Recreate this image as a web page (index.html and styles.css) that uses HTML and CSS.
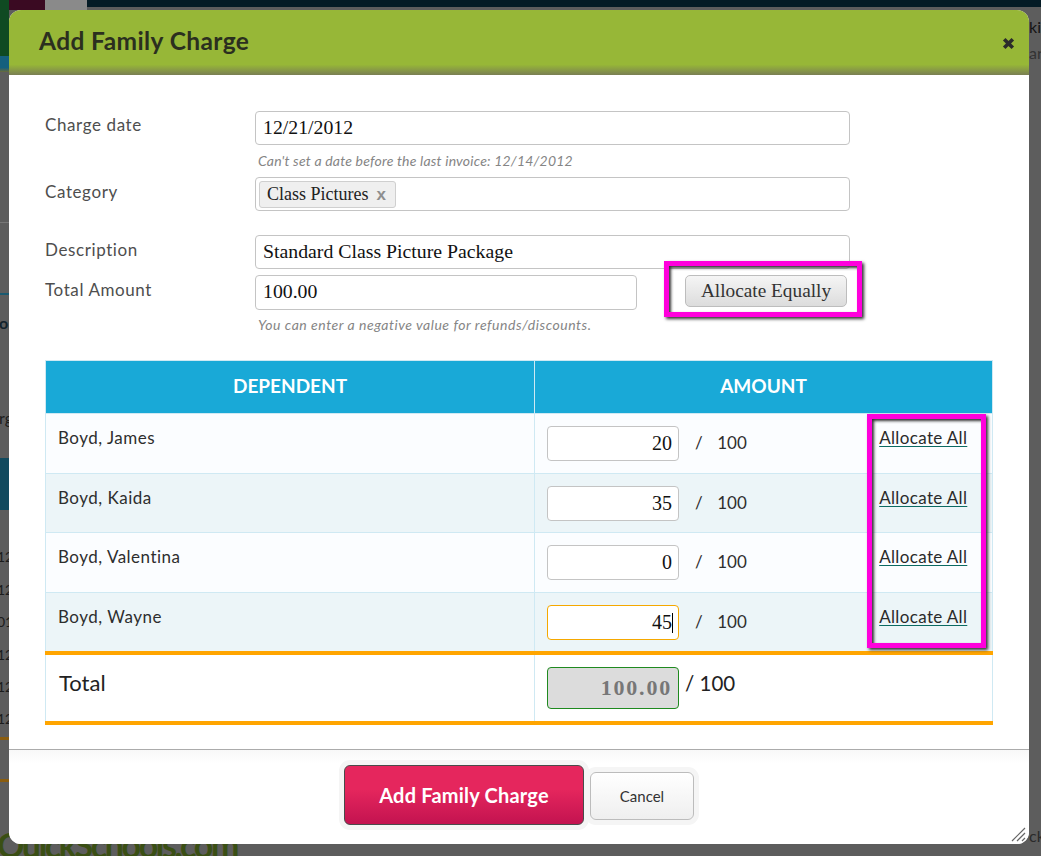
FILE: index.html
```html
<!DOCTYPE html>
<html lang="en">
<head>
<meta charset="utf-8">
<title>Add Family Charge</title>
<link rel="stylesheet" href="styles.css">
</head>
<body>
<div class="backdrop">
  <div class="bg-top"></div>
  <div class="bg-stripes"><i class="s1"></i><i class="s2"></i><i class="s3"></i></div>
  <div class="bg-teal"></div>
  <div class="bg-line o1"></div>
  <div class="bg-line o2"></div>
  <div class="bg-line o3"></div>
  <div class="bg-line o4"></div>
  <span class="bg-text t1">12</span>
  <span class="bg-text t2">12</span>
  <span class="bg-text t3">01</span>
  <span class="bg-text t4">12</span>
  <span class="bg-text t5">12</span>
  <span class="bg-text t6">12</span>
  <span class="bg-text t7">o</span>
  <span class="bg-text t8">rg</span>
  <span class="bg-text t9">kin</span>
  <span class="bg-text t10">ar</span>
  <span class="bg-text t11">ck</span>
  <span class="bg-logo">QuickSchools.com</span>
</div>

<section class="modal">
  <header class="modal-head">
    <h1 class="modal-title">Add Family Charge</h1>
    <svg class="close" width="13" height="13" viewBox="0 0 13 13"><path d="M2.2 2.2l8.6 8.6M10.8 2.2l-8.6 8.6" stroke="#2b2b2b" stroke-width="3.6" fill="none"/></svg>
  </header>

  <div class="modal-body">
    <form class="form">
      <label class="lbl">Charge date</label>
      <div class="ctl">
        <input class="field" value="12/21/2012">
        <p class="hint">Can't set a date before the last invoice: 12/14/2012</p>
      </div>
      <label class="lbl lbl-cat">Category</label>
      <div class="ctl">
        <div class="field tokens"><span class="token">Class Pictures <b class="token-x">x</b></span></div>
      </div>
      <label class="lbl lbl-desc">Description</label>
      <div class="ctl ctl-desc">
        <input class="field" value="Standard Class Picture Package">
      </div>
      <label class="lbl lbl-total">Total Amount</label>
      <div class="ctl ctl-total">
        <div class="total-row">
          <input class="field field-short" value="100.00">
          <button type="button" class="btn-equal">Allocate Equally</button>
        </div>
        <p class="hint hint-wide">You can enter a negative value for refunds/discounts.</p>
      </div>
    </form>

    <table class="alloc">
      <thead>
        <tr><th class="c1">DEPENDENT</th><th class="c2">AMOUNT</th></tr>
      </thead>
      <tbody>
        <tr class="r1">
          <td>Boyd, James</td>
          <td><div class="amt"><input class="num" value="20"><span class="slash">/</span><span class="of">100</span><a class="all" href="#">Allocate All</a></div></td>
        </tr>
        <tr class="r2">
          <td>Boyd, Kaida</td>
          <td><div class="amt"><input class="num" value="35"><span class="slash">/</span><span class="of">100</span><a class="all" href="#">Allocate All</a></div></td>
        </tr>
        <tr class="r3">
          <td>Boyd, Valentina</td>
          <td><div class="amt"><input class="num" value="0"><span class="slash">/</span><span class="of">100</span><a class="all" href="#">Allocate All</a></div></td>
        </tr>
        <tr class="r4">
          <td>Boyd, Wayne</td>
          <td><div class="amt"><span class="focus-wrap"><input class="num num-focus" value="45"><i class="caret"></i></span><span class="slash">/</span><span class="of">100</span><a class="all" href="#">Allocate All</a></div></td>
        </tr>
      </tbody>
      <tfoot>
        <tr>
          <td class="total-label">Total</td>
          <td class="total-cell"><div class="amt-total"><input class="num num-total" value="100.00" disabled><span class="total-of">/ 100</span></div></td>
        </tr>
      </tfoot>
    </table>
  </div>

  <footer class="modal-foot">
    <button type="button" class="btn-add">Add Family Charge</button>
    <button type="button" class="btn-cancel">Cancel</button>
  </footer>

  <svg class="grip" width="16" height="16" viewBox="0 0 16 16"><path d="M1 15L14 2M6 15L14 7M11 15l3-3" stroke="#666" stroke-width="1.2" fill="none"/></svg>

  <div class="mark mark-equal"></div>
  <div class="mark mark-all"></div>
</section>
</body>
</html>
```
FILE: styles.css
```css
* { box-sizing: border-box; }
html, body { margin: 0; height: 100%; }
body {
  background: #5d5d5d;
  font-family: "Lato", "Open Sans", sans-serif;
  overflow: hidden;
  position: relative;
  height: 856px;
}
.backdrop { position: absolute; inset: 0; overflow: hidden; }
.bg-top { position: absolute; left: 0; right: 0; top: 0; height: 7px; background: #041b25; }
.bg-stripes { position: absolute; left: 0; top: 0; height: 72px; display: flex; align-items: flex-start; }
.bg-stripes i { display: block; }
.bg-stripes .s1 { width: 9px; height: 72px; background: linear-gradient(#0f4a22 0, #0f4a22 78%, #14607e 78%, #14607e 94%, #6b6a3a 100%); }
.bg-stripes .s2 { width: 36px; height: 10px; background: #3a0a22; }
.bg-stripes .s3 { width: 42px; height: 10px; background: #8a8a8a; }
.bg-teal { position: absolute; left: 0; top: 458px; width: 9px; height: 52px; background: #124a5e; }
.bg-line { position: absolute; left: 0; width: 9px; height: 3px; background: #8a5d10; }
.o1 { top: 737px; }
.o2 { top: 779px; }
.o3 { top: 293px; height: 2px; background: #1a5a70; }
.o4 { top: 222px; height: 1px; background: #777; }
.bg-text { position: absolute; left: -3px; font-size: 14px; line-height: 18px; color: #1c1c1c; }
.t1 { top: 548px; } .t2 { top: 581px; } .t3 { top: 613px; }
.t4 { top: 646px; } .t5 { top: 678px; } .t6 { top: 710px; }
.t7 { top: 314px; left: -1px; font-size: 16px; font-weight: 700; color: #12222c; }
.t8 { top: 409px; left: -1px; font-size: 16px; }
.t9 { left: 1029px; top: 18px; font-size: 16px; color: #141414; }
.t10 { left: 1029px; top: 44px; font-size: 16px; color: #333; }
.t11 { left: 1029px; top: 827px; font-size: 16px; color: #2a2a2a; }
.bg-logo {
  position: absolute; left: -3px; top: 824px;
  font-size: 34px; line-height: 42px; letter-spacing: -2.4px; font-weight: 700; color: #3a4f14;
}

.modal {
  position: absolute; left: 9px; top: 10px;
  width: 1020px; height: 834px;
  background: #fff;
  border-radius: 12px;
  display: flex; flex-direction: column;
}
.modal-head {
  height: 65px; flex: none;
  padding-left: 30px; padding-right: 14px;
  display: flex; align-items: center; justify-content: space-between;
  background: linear-gradient(#97b737 0, #97b737 84%, #7a7f53 100%);
  border-radius: 12px 12px 0 0;
}
.modal-title { margin: 0 0 4px; font-size: 24.5px; line-height: 30px; font-weight: 700; letter-spacing: .4px; color: #2b2f1f; }
.close { margin-top: 1px; }

.modal-body { flex: none; padding: 36px 36px 0; height: 674px; }

.form { display: grid; grid-template-columns: 210px 595px; }
.lbl { font-size: 17px; letter-spacing: .6px; line-height: 22px; color: #4e4e4e; padding-top: 3px; }
.lbl-cat { padding-top: 4px; }
.lbl-desc { margin-top: 24px; padding-top: 4px; }
.lbl-total { margin-top: 6px; padding-top: 4px; }
.ctl-desc { margin-top: 24px; }
.ctl-total { margin-top: 6px; }
.field {
  display: block; width: 100%; height: 34px;
  border: 1px solid #c4c4c4; border-radius: 4px;
  padding: 0 7px 2px;
  font-family: "Liberation Serif", serif; font-size: 19.8px; color: #111;
  background: #fff;
}
.hint {
  margin: 0; height: 32px; padding-top: 8px; padding-left: 3px;
  font-size: 14px; letter-spacing: .2px; line-height: 16px; font-style: italic; color: #858585;
}
.hint-wide { letter-spacing: .53px; }
.tokens { padding: 3px; }
.token {
  display: inline-flex; align-items: center; height: 27px; padding: 0 9px 0 7px;
  background: #efefef; border: 1px solid #cfcfcf; border-radius: 3px;
  font-family: "Liberation Serif", serif; font-size: 18px; color: #222;
}
.token-x { margin-left: 8px; font-family: "Liberation Sans", sans-serif; font-size: 17px; font-weight: 700; color: #8e8e8e; }
.total-row { display: flex; align-items: flex-start; }
.field-short { width: 382px; height: 35px; flex: none; }
.btn-equal {
  margin-left: 48px; width: 162px; height: 32px; padding: 0;
  border: 1px solid #bdbdbd; border-radius: 5px;
  background: linear-gradient(#f5f5f5, #dcdcdc);
  font-family: "Liberation Serif", serif; font-size: 19.3px; color: #333;
}
.ctl-total .hint { padding-top: 7px; height: 50px; }

.alloc {
  border-collapse: collapse; table-layout: fixed; width: 947px;
  font-size: 17px; letter-spacing: .5px; color: #2e2e2e;
}
.alloc th {
  height: 53px; background: #19a9d7; color: #fff;
  font-size: 19px; font-weight: 700; letter-spacing: 0; text-align: center;
  border-left: 1px solid #cfe9f3; border-top: 1px solid #cfe9f3; padding: 0 0 3px;
}
.alloc .c1 { width: 489px; }
.alloc .c2 { width: 458px; border-right: 1px solid #cfe9f3; }
.alloc td {
  border: 1px solid #cfe9f3; padding: 0; vertical-align: top;
}
.alloc tbody td:first-child { padding: 13px 12px 0; line-height: 22px; }
.alloc .r1 { height: 60px; background: #fbfdff; }
.alloc .r2 { height: 59px; background: #ecf5f8; }
.alloc .r3 { height: 60px; background: #fbfdff; }
.alloc .r4 { height: 60px; background: #ecf5f8; }
.amt { display: flex; align-items: flex-start; padding: 12px 0 0 12px; }
.num {
  display: block; width: 132px; height: 35px; flex: none;
  border: 1px solid #c4c4c4; border-radius: 4px; padding: 0 6px;
  text-align: right; background: #fff;
  font-family: "Liberation Serif", serif; font-size: 20px; color: #111;
}
.num-focus { border-color: #f5a800; }
.focus-wrap { position: relative; flex: none; display: block; }
.caret { position: absolute; right: 6px; top: 8px; width: 1px; height: 20px; background: #000; }
.slash { margin-left: 16px; line-height: 34px; }
.of { margin-left: 14px; line-height: 34px; width: 162px; flex: none; letter-spacing: 0; }
.all {
  font-size: 17px; line-height: 22px; margin-top: 1px; letter-spacing: .35px; color: #2a2a2a;
  text-decoration: underline; text-decoration-color: #0b6a62;
  text-underline-offset: 2px;
}
.alloc tfoot td { border-top: 4px solid #ffa500; border-bottom: 4px solid #ffa500; height: 70px; background: #fff; }
.alloc .total-label { padding: 14px 13px 0; font-size: 22px; letter-spacing: 0; line-height: 28px; color: #222; }
.amt-total { display: flex; align-items: flex-start; padding: 12px 0 0 12px; }
.num-total {
  height: 42px; background: #dcdcdc; border-color: #1f8a1f;
  color: #777; font-weight: 700; font-size: 22px; letter-spacing: 1.8px; opacity: 1;
}
.total-of { margin-left: 6px; font-size: 20.5px; letter-spacing: 0; line-height: 32px; color: #222; }

.modal-foot {
  flex: 1; border-top: 1px solid #ababab;
  background: linear-gradient(#f8f8f8, #fff 14px);
  border-radius: 0 0 12px 12px;
  display: flex; justify-content: center; align-items: flex-start; gap: 6px;
  padding-top: 15px;
}
.btn-add {
  width: 240px; height: 60px; padding: 0;
  border: 1px solid #4a4a4a; border-radius: 6px;
  background: linear-gradient(#e5265d 0, #e5265d 40%, #c31350 100%);
  color: #fff; font-family: "Lato", sans-serif; font-size: 20px; letter-spacing: .2px; font-weight: 700;
  box-shadow: 0 0 0 5px #f5f5f5;
}
.btn-cancel {
  width: 104px; height: 48px; margin-top: 7px; padding: 0;
  border: 1px solid #bcbcbc; border-radius: 6px;
  background: linear-gradient(#fff, #efefef);
  color: #333; font-family: "Lato", sans-serif; font-size: 15px;
  box-shadow: 0 0 0 5px #f5f5f5;
}
.grip { position: absolute; right: 2px; bottom: 2px; }

.mark { position: absolute; border: 5px solid #ff00dc; box-shadow: 2px 2px 3px #333, inset 2px 2px 3px #333; }
.mark-equal { left: 655px; top: 251px; width: 198px; height: 56px; }
.mark-all { left: 858px; top: 404px; width: 119px; height: 234px; }
```
